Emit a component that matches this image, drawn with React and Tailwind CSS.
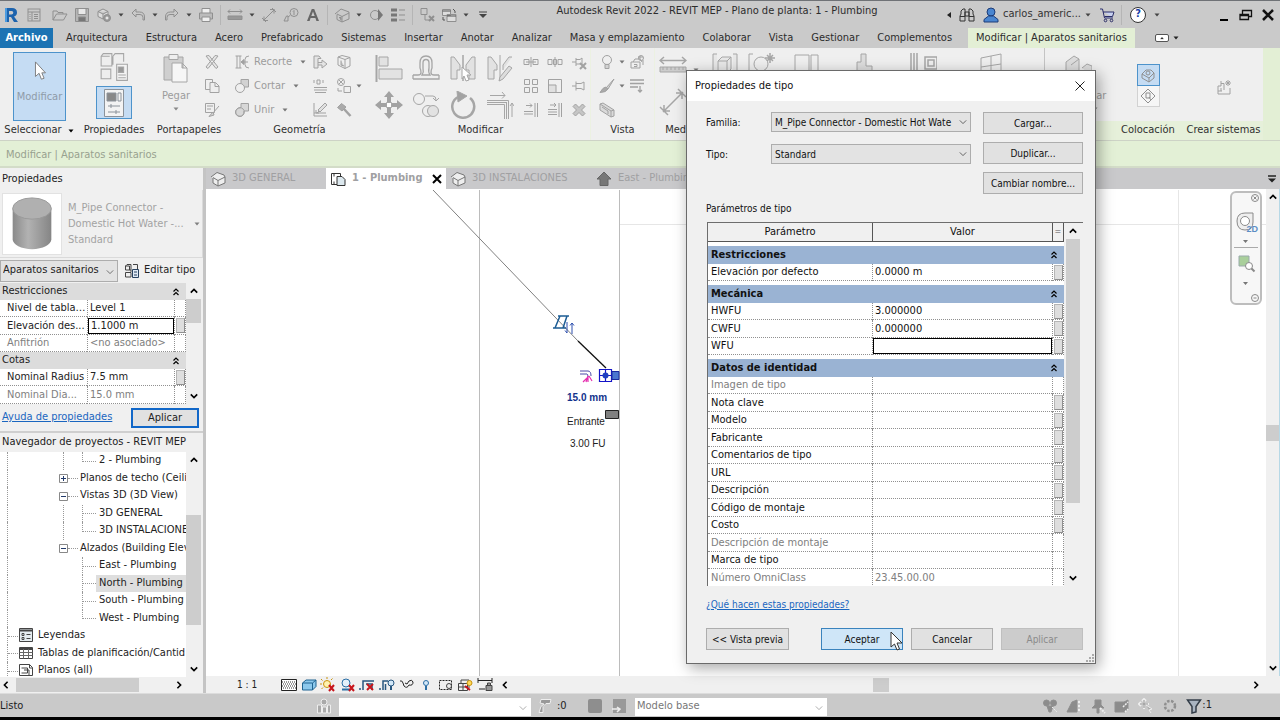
import clsx from "clsx";

const G = "#8f8f8f";

const TABS = [
  "Arquitectura", "Estructura", "Acero", "Prefabricado", "Sistemas", "Insertar", "Anotar", "Analizar",
  "Masa y emplazamiento", "Colaborar", "Vista", "Gestionar", "Complementos",
];

const TYPE_GROUPS = [
  { title: "Restricciones", rows: [{ name: "Elevación por defecto", value: "0.0000 m", button: true }] },
  {
    title: "Mecánica",
    rows: [
      { name: "HWFU", value: "3.000000", button: true },
      { name: "CWFU", value: "0.000000", button: true },
      { name: "WFU", value: "", button: true, active: true },
    ],
  },
  {
    title: "Datos de identidad",
    rows: [
      { name: "Imagen de tipo", value: "", muted: true },
      { name: "Nota clave", value: "", button: true },
      { name: "Modelo", value: "", button: true },
      { name: "Fabricante", value: "", button: true },
      { name: "Comentarios de tipo", value: "", button: true },
      { name: "URL", value: "", button: true },
      { name: "Descripción", value: "", button: true },
      { name: "Código de montaje", value: "", button: true },
      { name: "Costo", value: "", button: true },
      { name: "Descripción de montaje", value: "", muted: true },
      { name: "Marca de tipo", value: "" },
      { name: "Número OmniClass", value: "23.45.00.00", muted: true },
    ],
  },
];

const INSTANCE_GROUPS = [
  {
    title: "Restricciones",
    rows: [
      { name: "Nivel de tabla ...", value: "Level 1" },
      { name: "Elevación des...", value: "1.1000 m", button: true, active: true },
      { name: "Anfitrión", value: "<no asociado>", muted: true },
    ],
  },
  {
    title: "Cotas",
    rows: [
      { name: "Nominal Radius", value: "7.5 mm", button: true },
      { name: "Nominal Dia...", value: "15.0 mm", muted: true },
    ],
  },
];

// `rail` keeps the parent's dotted guide running past a nested item.
const TREE = [
  { level: 3, label: "2 - Plumbing", last: true, rail: true },
  { level: 2, label: "Planos de techo (Ceili", sign: "+" },
  { level: 2, label: "Vistas 3D (3D View)", sign: "-" },
  { level: 3, label: "3D GENERAL", rail: true },
  { level: 3, label: "3D INSTALACIONE", last: true, rail: true },
  { level: 2, label: "Alzados (Building Elev", sign: "-" },
  { level: 3, label: "East - Plumbing" },
  { level: 3, label: "North - Plumbing", selected: true },
  { level: 3, label: "South - Plumbing" },
  { level: 3, label: "West - Plumbing", last: true },
  { level: 1, label: "Leyendas", icon: "legend" },
  { level: 1, label: "Tablas de planificación/Cantid", icon: "table" },
  { level: 1, label: "Planos (all)", icon: "sheet" },
];

// Small drawings on a 16 x 16 grid.
const ICONS = {
  home: <><rect x="2" y="2" width="12" height="12" /><path d="M2 5h12M6 5v9M8 7.500h4M8 9.500h4M8 11.500h4M3.500 7.500h1M3.500 9.500h1M3.500 11.500h1" /></>,
  open: <path d="M1 13V4h4l1 1.500h5V7M1 13l3.500-6H15l-3.500 6z" />,
  save: <><path d="M1.500 1.500h13v13h-13z" fill="#b5b5b5" /><path d="M4 1.500h8v6H4z" fill="#e8e8e8" /><path d="M4.500 10h7v4.500h-7z" fill="#777" /></>,
  sync: <><path d="M2 4.500 7 2l5 2.500v5L7 12 2 9.500zM2 4.500 7 7l5-2.500M7 7v5" fill="#ddd" /><circle cx="11" cy="11" r="3.500" fill="#999" /><path d="M9.500 11h3M11 9.500v3" stroke="#fff" /></>,
  undo: <path d="M6 2 2 6l4 4V7.500h4q3 0 3 3V13h1.500v-3q0-5-5-5H6z" />,
  redo: <path d="m10 2 4 4-4 4V7.500H6q-3 0-3 3V13H1.500v-3q0-5 5-5H10z" />,
  print: <><path d="M4 6V1.500h8V6" fill="#eee" /><path d="M1.500 6h13v6h-13z" fill="#bbb" /><path d="M4 10h8v4.500H4z" fill="#eee" /></>,
  measure: <><path d="M1 4.500h14M3 2.500l-2 2 2 2M13 2.500l2 2-2 2" /><path d="M1 9h14v3.500H1z" fill="#999" /></>,
  dim: <path d="m2.500 13.500 11-11M1 11l4 4M11 1l4 4M3 9.500v4h4M13 6.500v-4H9" />,
  tag: <><circle cx="11" cy="5.500" r="4" /><path d="M10 4.500l1-1v4.500M5 9v5H1l2.500-5zM7 8.500 5 10" /></>,
  letter: <path d="m2 14 4.800-12h2.400L14 14h-2.600l-1-3H5.600l-1 3zm4.300-5h3.400L8 4.500z" fill="#666" stroke="none" />,
  house: <><path d="M1 7 7 2l8 3v7l-7 3-5-2.500V7.500" /><path d="m3 7 5 2.500V15M8 9.500 15 6" /><path d="M5 10.500h2v3" fill="#999" /></>,
  section: <><circle cx="7" cy="8" r="4.500" /><path d="m10 2 5 6-5 6z" fill="#777" stroke="none" /></>,
  thin: <><path d="M1 3h6M1 8h6M1 13h6" strokeWidth="3" stroke="#777" /><path d="M9 3h6M9 8h6M9 13h6" /></>,
  closewin: <><path d="M2 1.500h6v6H2zM6 7v6h4" /><path d="m10 9 5 5m0-5-5 5" strokeWidth="2" /></>,
  switchwin: <><path d="M1.500 2.500h8v6h-8zM6 7.500h9v7H6z" fill="#ddd" /><path d="M1.500 4h8M6 9h9M12 2l2 2v2M2 10v3h2" stroke="#555" /></>,
  binoculars: <><path d="M2 7V4l2-2h2v12H1V9zM14 7V4l-2-2h-2v12h5V9zM6 5h4v4H6z" stroke="#333" /><path d="M1 9.500h5M10 9.500h5" stroke="#333" /></>,
  user: <><circle cx="8" cy="5" r="4" fill="#4a86d0" stroke="#1d3c78" /><path d="M5.500 9 1 12.500V15h14v-2.500L10.500 9z" fill="#4a86d0" stroke="#1d3c78" /></>,
  cart: <><path d="M1 2h2.500l2 9H14M4 5h11l-1.500 4.500H5.500" fill="#c9d2f2" stroke="#2b2d66" /><circle cx="6.500" cy="13.500" r="1.300" stroke="#2b2d66" /><circle cx="12.500" cy="13.500" r="1.300" stroke="#2b2d66" /></>,
  cut: <path d="m2 2 3-.500L14 13l-2 1.500L2 2zM14 2l-3-.500L2 13l2 1.500z" fill="#e4e4e4" />,
  copy: <><path d="M1.500 1.500h7v10h-7z" /><path d="M6 4.500h5.500L15 8v6.500H6zM11 5v3.500h4" fill="#eee" /></>,
  match: <><path d="M1.500 1.500h9v9h-9zM3 4h6M3 7h4" /><path d="m15 4-6 7M9 10l-4 4.500 5-1.500z" fill="#ccc" /></>,
  cope: <><path d="M1.500 2h6M1.500 14h6M3 2v12M6 2v12M15 2q-4 0-4 3.500v5q0 3.500 4 3.500M14 8H7.500" /><path d="m10 5.500-3 2.500 3 2.500z" fill={G} /></>,
  cutgeo: <><path d="M7 1.500h7.500V9H7z" fill="#ccc" /><circle cx="6" cy="10" r="4.500" fill="#efefef" /></>,
  join: <><path d="M7 1.500h7.500V9H10q0 5-4 5.500Q1.500 14 1.500 10 2 6 7 5.500z" fill="#d2d2d2" /><circle cx="6" cy="10" r="4.300" /></>,
  wall: <><path d="M2 2h5l2 2.500H6V14H2zM6 8.500h4V6l5 4-5 4v-3H6" fill="#e2e2e2" /></>,
  cube: <><path d="m2 3 4-1.500 8 2V12l-5 2.500L2 11zM2 3l7 2.500 5-2M9 5.500v9" /><path d="M5 6.500v4.500l3 1" fill="#bbb" /></>,
  beam: <><path d="M2 2v3M5 2h3v4H5zM11 2v3M2 9.500h13M2 12h13M3 14.500h11" /></>,
  split: <><circle cx="5" cy="4" r="3.500" /><path d="m3 2 4 4m0-4L3 6M8 8.500h6.500v6H8zM2 10v3h4" /></>,
  demolish: <><path d="M2 1v13h13M5 11l8-8M4 8v3h3M2 11h12" /><path d="m13 1 2 2-7 7-2-2z" fill="#ddd" /></>,
  hammer: <><path d="m1.500 5.500 4-4 4.500 3.500-4 4z" fill="#999" /><path d="m8 7 6.500 7" strokeWidth="2.500" /></>,
  splitface: <path d="M1 5.500h5v5H1zM10 5.500h5v5h-5zM8 3v10M3 8h10" />,
  splitgap: <path d="M1 5.500h4v5H1zM11 5.500h4v5h-4zM6.500 5.500h3v5h-3zM8 3v10" />,
  unpin: <><path d="M1 8h4M5 4v8M5 5.500h4L11 4v7l-2-1H5" /><path d="m9 9 6 6m0-6-6 6" strokeWidth="2" /></>,
  pin: <path d="M1 8h4M5 3.500v9M5 5.500h5L13 4v8l-3-1.500H5" />,
  array: <path d="M1.500 1.500h5v5h-5zM9.500 1.500h5v5h-5zM1.500 9.500h5v5h-5zM9.500 9.500h5v5h-5z" />,
  scale: <><path d="M1.500 1.500h13v13h-13z" /><path d="M1.500 7h7.500v7.500H1.500z" fill="#ddd" /></>,
  trimone: <path d="M1 9.500h9M1 12h9M3 3.500h6M7 1.500l2 2-2 2M12 1v14M14.500 1v14" />,
  trimmany: <path d="M1 7.500h9M1 10h9M1 12.500h9M3 3h6M7 1l2 2-2 2M12 1v14M14.500 1v14" />,
  remove: <path d="M2 4.500 4.500 2 8 5.500 11.500 2 14 4.500 10.500 8l3.500 3.500-2.500 2.500L8 10.500 4.500 14 2 11.500 5.500 8z" fill="#bbb" />,
  bulb: <><circle cx="8" cy="6" r="4.500" /><path d="M6 10.500h4v4H6z" fill="#ccc" /></>,
  displace: <><path d="M2 8h9v6H2zM4 8l2-3h5l2 3M5 10.500h3v2H5M11 5V2M9 3h5M14 6v5" /><circle cx="12" cy="4" r="2.500" /></>,
  brush: <><path d="m15 1-8 9 2 1z" fill="#ccc" /><path d="M7 9q-3 0-6 5.500 6 0 8-3.500z" fill="#999" /></>,
  linework: <path d="M1 2h14M1 5.500h14M1 9h8M11 8v6M9 12l2 2 2-2" strokeWidth="1.300" />,
  box: <><path d="m1 2 3-1 11 7v6l-3 1L1 8zM1 2l11 7v6M12 9l3-1M3 5l6 4v3" fill="#d6d6d6" /></>,
  placeface: <><path d="m2 7 4-4h5l3 3v5l-5 4-7-4zM2 7l7 4 5-5M9 11v4" /><circle cx="8" cy="6" r="2" /></>,
  placeplane: <><path d="m8 1 7 7-7 7-7-7z" /><path d="M6 5h4v5H6zM9 9l2 3" /></>,
  system: <><path d="M5 2v5H2v8h12V9M5 4.500h3V11M5 12V9M2 12h4" /><path d="M12 1v6M9 4h6M10 2l4 4m0-4-4 4" /></>,
  view3d: <><path d="M1 6 7 1.500 14 4l1 2v6l-7 3-5-3V7" fill="#eee" stroke="#777" /><path d="m3 6.500 5 3V15M8 9.500 15 6" stroke="#777" /></>,
  plan: <><path d="M1.500 2.500h9v11h-9z" fill="#fff" stroke="#333" /><path d="M7 5.500h5l3 3v6H7z" fill="#dce8ee" stroke="#333" /><path d="M4 2.500v3M4 13.500v-3" stroke="#333" /></>,
  elevation: <path d="m8 1 7 7h-3v6.500H4V8H1z" fill="#777" stroke="#666" />,
  legend: <><path d="M1.500 1.500h13v13h-13z" fill="#e5ecef" stroke="#444" /><path d="M1.500 3.500h13" stroke="#444" strokeWidth="2" /><path d="M4 6.500h2v2H4zM4 10.500h2v2H4zM8.500 7.500h4M8.500 11.500h4" stroke="#444" /></>,
  table: <><path d="M1.500 2.500h13v11h-13z" fill="#fff" stroke="#444" /><path d="M1.500 4h13" stroke="#444" strokeWidth="2" /><path d="M1.500 7.500h13M1.500 10.500h13M5.500 4v9.500M10.500 4v9.500" stroke="#666" /></>,
  sheet: <><path d="M1.500 2.500h10l3 3v8h-13z" fill="#fff" stroke="#444" /><path d="M3.500 6h6v5h-6M6 8h5v5.500M11.500 2.500V6h3" stroke="#444" /></>,
  edittype: <><path d="M1.500 3 3 1.500h4V7H1.500zM1.500 9.500h5.500V14H1.500zM9 1.500h4.500V6M1.500 3h4V7M7 9V7" stroke="#444" /><path d="M8.500 6.500h6v8h-6z" fill="#dfe9f5" stroke="#27415f" /><path d="M10 9h3M10 12h3" stroke="#27415f" /></>,
  detail: <><path d="M.5 2.500h15v11H.500z" fill="#fff" stroke="#222" /><path d="M1 5h14M1 9h14" stroke="#333" strokeDasharray="1 1" /><path d="M2 7h13M2 11h13" stroke="#333" strokeDasharray="1 1" /></>,
  bluebox: <><path d="M1.500 6 5 3h10v6.500L11.500 13h-10z" fill="#8cc8ec" stroke="#1f6391" /><path d="M1.500 6h10v7M11.500 6 15 3" stroke="#1f6391" /></>,
  sun: <><circle cx="7" cy="7" r="3.500" fill="#fff3b0" stroke="#c99310" /><path d="M7 0v2M1 2l1.500 1.500M0 7h2M1.500 12 3 10.500M12.500 1.500 11 3" stroke="#c99310" /><path d="m9 8 5 6m0-6-5 6" stroke="#c8151b" strokeWidth="2" /></>,
  shadow: <><circle cx="6" cy="6" r="4" fill="#e4f0fa" stroke="#2b6ea5" /><path d="M2 12.500h8" stroke="#2b6ea5" strokeWidth="2" /><path d="m9 8 5 6m0-6-5 6" stroke="#c8151b" strokeWidth="2" /></>,
  crop: <><path d="M0 12h2M4 13V4h11M7 7h6v6" stroke="#27567f" strokeWidth="1.500" /><path d="m8 7 6 6m0-6-6 6" stroke="#c8151b" strokeWidth="2" /></>,
  cropshow: <><path d="M0 12h2M4 13V4h5M6.500 13V7" stroke="#27567f" strokeWidth="1.500" /><circle cx="12" cy="6" r="3" fill="#d3e8f8" stroke="#27567f" /><path d="M12 9v4" stroke="#27567f" strokeWidth="2" /></>,
  glasses: <><path d="M1 4q2-1 3 2l1 3q3 3 5-1 4 1 4-3-1-3-4-1L8 7 6 6" stroke="#222" /></>,
  bluebulb: <><circle cx="8" cy="6" r="2.500" fill="#d3e8f8" stroke="#2b6ea5" /><path d="M8 9v4" stroke="#2b6ea5" strokeWidth="2" /></>,
  tempview: <><path d="M1.500 3.500h12v9h-12z" stroke="#222" strokeDasharray="2 1" /><circle cx="11" cy="9" r="2.500" fill="#eee" stroke="#444" /></>,
  analytic: <><path d="M1.500 6.500h9v7h-9zM4 6V3h8v8M1.500 10h9M6 6.500v7" stroke="#444" /><path d="m8 9 5 4" stroke="#c8151b" strokeWidth="2" /><circle cx="12.500" cy="6" r="2.500" fill="#ffd957" stroke="#c99310" /></>,
  constraints: <><path d="M1 3.500h14M1 1v5M15 1v5M2 12h6" stroke="#222" /><path d="M9 8.500h6v5H9zM10.500 8V6h3v2" fill="#999" stroke="#444" /></>,
  workset: <><path d="M1.500 7h4v8h-4zM6.500 9h4v6h-4zM11.500 7h3v8h-3z" fill="#a9a9a9" stroke="#eee" /><circle cx="8" cy="4" r="3" fill="#a9a9a9" stroke="#eee" /></>,
  request: <><path d="M4 1.500h10l-1 4H9l-3 3v6H2l2-6 3-2.500-4-1z" fill="#999" stroke="#eee" /></>,
  square: <rect x="1" y="1" width="14" height="14" rx="2" fill="#8e8e8e" stroke="none" />,
  squareadd: <><rect x="2" y="1" width="13" height="14" fill="#999" stroke="none" /><path d="M1 11h7M6 9l3 2-3 3" stroke="#eee" strokeWidth="1.500" /></>,
  selflink: <><circle cx="4.500" cy="5" r="3" fill="#8c8c8c" /><circle cx="11.500" cy="5" r="3" fill="#8c8c8c" /><path d="M5 8h6l-2 6H7z" fill="#8c8c8c" /><path d="m10 9 5 5" stroke="#eee" strokeDasharray="2 1" /></>,
  selunder: <><path d="M1 14 6 4l5-2v12z" fill="#8c8c8c" /><path d="M13 3v11" stroke="#eee" strokeWidth="2" strokeDasharray="2 2" /></>,
  selpin: <><path d="M5 2h6v5l3 3H2l3-3zM7 10h2v5H7z" fill="#8c8c8c" /><path d="m10 10 5 5" stroke="#eee" strokeDasharray="2 1" strokeWidth="2" /></>,
  selface: <><path d="M1 4h9l4-2v9l-3 3H1z" fill="#8c8c8c" /><path d="m9 9 5-5M11 14l3-3" stroke="#eee" strokeWidth="1.500" strokeDasharray="2 1" /></>,
  drag: <><path d="M6 1v10M1 6h10M4 3l2-2 2 2M3 4 1 6l2 2" stroke="#eee" strokeWidth="2" /><path d="M6 2v8M2 6h8" /><path d="m8 7 6 4-3 1 2 3" fill="#aaa" stroke="#eee" /></>,
  ring: <circle cx="8" cy="8" r="5" strokeWidth="2.500" strokeDasharray="2.500 1.500" />,
  filter: <path d="M1.500 2h13L10 8.500V14l-4 1V8.500z" fill="#a9b4c1" stroke="#333d48" strokeWidth="1.500" />,
};

function Icon({ name, className = "size-4" }) {
  return (
    <svg viewBox="0 0 16 16" className={clsx("shrink-0", className)} fill="none" stroke={G} aria-hidden="true">
      {ICONS[name]}
    </svg>
  );
}

function Caret({ className = "text-[#444]" }) {
  return (
    <svg viewBox="0 0 6 4" className={clsx("h-1 w-1.5 shrink-0", className)} aria-hidden="true">
      <path d="M.5.500h5L3 3.500z" fill="currentColor" />
    </svg>
  );
}

const CHEVRONS = { up: "M1 7l4-4 4 4", down: "M1 3l4 4 4-4", left: "M7 1 3 5l4 4", right: "M3 1l4 4-4 4" };

function Chevron({ dir = "down", className = "text-black", stroke = 2 }) {
  return (
    <svg viewBox="0 0 10 10" className={clsx("size-2 shrink-0", className)} aria-hidden="true">
      <path d={CHEVRONS[dir]} fill="none" stroke="currentColor" strokeWidth={stroke} />
    </svg>
  );
}

function DoubleChevron() {
  return (
    <svg viewBox="0 0 8 8" className="size-2 shrink-0" aria-hidden="true">
      <path d="M1.500 3.500 4 1l2.500 2.500M1.500 7 4 4.500 6.500 7" fill="none" stroke="#000" strokeWidth="1.200" />
    </svg>
  );
}

function IconButton({ name, label, className }) {
  return (
    <button type="button" aria-label={label || name} className={clsx("flex items-center justify-center", className)}>
      <Icon name={name} />
    </button>
  );
}

const Divider = () => <span className="h-5 w-px bg-[#b5b5b5]" />;

function TitleBar() {
  return (
    <header className="flex h-7 items-center border-t border-[#6f7276] bg-[#cacaca] pr-1">
      <div className="flex items-center gap-1.5 pl-1 text-[#444]">
        <svg viewBox="0 0 14 16" className="mr-0.5 h-4 w-3.5" aria-label="Revit">
          <path d="M1 1h7q5 0 5 4.500 0 3-3 4L14 15h-4L7 10H5v5H1zm4 3v3.500h2.500q1.800 0 1.800-1.800T7.500 4z" fill="#1d63ad" />
          <path d="M1 1h2v14H1z" fill="#4b9be0" />
        </svg>
        <IconButton name="home" />
        <IconButton name="open" className="ml-1" />
        <IconButton name="save" />
        <IconButton name="sync" />
        <Caret />
        <IconButton name="undo" />
        <Caret />
        <IconButton name="redo" />
        <Caret />
        <IconButton name="print" />
        <Divider />
        <IconButton name="measure" />
        <Caret />
        <IconButton name="dim" />
        <IconButton name="tag" />
        <IconButton name="letter" />
        <Divider />
        <IconButton name="house" />
        <Caret />
        <IconButton name="section" />
        <IconButton name="thin" />
        <Divider />
        <IconButton name="closewin" />
        <IconButton name="switchwin" />
        <Caret />
        <svg viewBox="0 0 8 8" className="ml-1 size-2" aria-hidden="true">
          <path d="M0 1h8" stroke="#444" />
          <path d="M0 3h8L4 7z" fill="#444" />
        </svg>
      </div>
      <h1 className="flex-1 pb-1.5 text-center text-[#2c2c2c]">
        Autodesk Revit 2022 - REVIT MEP - Plano de planta: 1 - Plumbing
      </h1>
      <div className="flex items-center text-[#333]">
        <svg viewBox="0 0 4 6" className="mr-2 h-1.5 w-1" aria-hidden="true"><path d="M4 0v6L0 3z" fill="#222" /></svg>
        <IconButton name="binoculars" label="Buscar" className="mr-2" />
        <button type="button" className="mr-2 flex items-center gap-1">
          <Icon name="user" />
          <span>carlos_americ...</span>
          <Caret />
        </button>
        <IconButton name="cart" label="Tienda" className="mr-1.5" />
        <Divider />
        <button type="button" aria-label="Ayuda" className="ml-2 mr-2 flex size-4 items-center justify-center rounded-full border border-[#333] bg-white text-[11px] font-bold text-[#1a3fa8]">
          ?
        </button>
        <Caret />
        <div className="ml-14 flex items-center gap-1.5 text-black">
          <button type="button" aria-label="Minimizar" className="flex size-4 items-end justify-center pb-0.5">
            <span className="h-0.5 w-2 bg-black" />
          </button>
          <button type="button" aria-label="Restaurar">
            <svg viewBox="0 0 16 16" className="size-4" fill="none" stroke="#111" strokeWidth="1.300">
              <path d="M4.500 7V3.500h9v6H11M2 7.500h8.500v5H2zM2 8.500h8.500" />
            </svg>
          </button>
          <button type="button" aria-label="Cerrar">
            <svg viewBox="0 0 16 16" className="size-4" stroke="#111" strokeWidth="2.500"><path d="m3 3 10 10M13 3 3 13" /></svg>
          </button>
        </div>
      </div>
    </header>
  );
}

function RibbonTabs() {
  return (
    <nav className="flex h-5 items-center bg-[#cacaca] text-[#2c2c2c]">
      <a href="#archivo" className="mr-3 flex h-full w-[53px] items-center justify-center bg-[#1c73b3] font-bold text-white">
        Archivo
      </a>
      <div className="flex items-center gap-[18px] pl-px">
        {TABS.map((tab) => (
          <a key={tab} href="#ribbon" className="whitespace-nowrap">{tab}</a>
        ))}
      </div>
      <a href="#ribbon" className="ml-4 flex h-full items-center whitespace-nowrap bg-[#e3efd5] px-2">
        Modificar | Aparatos sanitarios
      </a>
      <button type="button" aria-label="Minimizar cinta" className="ml-5 flex items-center gap-1">
        <span className="flex h-2 w-3.5 items-center justify-center rounded-xs border border-[#555] bg-white">
          <Caret className="rotate-180 scale-75" />
        </span>
        <Caret className="text-[#222]" />
      </button>
    </nav>
  );
}

function Panel({ title, className, titleClass, children }) {
  return (
    <section className={clsx("flex shrink-0 flex-col", className)}>
      <div className="flex h-[73px] pt-1">{children}</div>
      <h2 className={clsx("flex flex-1 items-center justify-center gap-1.5 whitespace-nowrap text-[#2f2f2f]", titleClass)}>{title}</h2>
    </section>
  );
}

function SmallColumn({ names }) {
  return (
    <div className="flex flex-col gap-2 pt-0.5 opacity-80">
      {names.map((n) => <IconButton key={n} name={n} />)}
    </div>
  );
}

// Larger ribbon drawings on a 28 x 28 grid.
function Big({ children, label, className = "size-7" }) {
  return (
    <button type="button" aria-label={label} className={clsx("shrink-0", className)}>
      <svg viewBox="0 0 28 28" className="size-full" fill="none" stroke="#a6a6a6">{children}</svg>
    </button>
  );
}

function ModifyPanel() {
  return (
    <Panel title="Modificar" className="w-[219px]">
      <div className="flex gap-[9px] pl-1">
        <div className="grid grid-cols-4 gap-x-[9px] gap-y-1.5 pt-0.5">
          <Big label="Alinear"><path d="M1.500 1v27" strokeWidth="2" /><path d="M4 3h9v9H4zM4 15h23v10H4z" fill="#e2e2e2" /></Big>
          <Big label="Desfase"><path d="M1 21h5q3 0 3-2.500t-1-4.500V9q0-7 6-7t6 7v5q-1 2-1 4.500t3 2.500h5M1 25h26v-4M1 21v4M10 21h8q-2-3-1-7V9q0-3.500-3-3.500T11 9v5q1 4-1 7z" strokeWidth="1.300" /></Big>
          <Big label="Reflejar eje"><path d="M14 1v26" strokeWidth="1.500" /><path d="M2 3h3l6 8v5H8v9H2zM26 3h-3l-6 8v5h3v9h6z" fill="#e2e2e2" /><path d="m13 13 9 8h-4l2 5-3 1-2-5-2 3z" fill="#fff" /></Big>
          <Big label="Reflejar dibujar"><path d="M14 1v26" /><path d="M2 3h3l6 8v5H8v9H2zM26 3h-3l-6 8v5" fill="#e2e2e2" /><path d="m26 14-9 11-4 2 1-4 9-11z" fill="#ddd" /></Big>
          <Big label="Mover"><path d="m14 0 5 6h-3v5h-4V6H9zM14 28l5-6h-3v-5h-4v5H9zM0 14l6-5v3h5v4H6v3zM28 14l-6-5v3h-5v4h5v3z" fill="#a2a2a2" stroke="none" /><path d="M11.500 11.500h5v5h-5z" fill="#fff" /></Big>
          <Big label="Copiar"><circle cx="7" cy="8" r="5.500" /><path d="M13 5h8q3 0 3 4M21 7l3 3 3-3" /><circle cx="16" cy="20" r="5.500" fill="#eee" /><circle cx="21" cy="20" r="5.500" fill="#e2e2e2" /></Big>
          <Big label="Rotar"><path d="M9 6a11 11 0 1 0 12 1" strokeWidth="2.500" /><path d="m8 0 10 5-9 6z" fill="#a2a2a2" /></Big>
          <Big label="Recortar"><path d="M1 9.500h21.500V28M1 13.500h17.500V28M1 11.500h19M20.500 28V11M4 4.500h15M16 1l3 3.500-3 3M26 26V12M24 15l2-3 2 3" /></Big>
        </div>
        <div className="flex gap-2">
          <SmallColumn names={["splitface", "array", "trimone"]} />
          <SmallColumn names={["splitgap", "scale", "trimmany"]} />
          <SmallColumn names={["unpin", "pin", "remove"]} />
        </div>
      </div>
    </Panel>
  );
}

function Ribbon() {
  return (
    <div className="flex h-[93px] shrink-0 overflow-hidden border-b border-[#cdd3c6] bg-[#efefef]">
      <Panel title={<>Seleccionar <Caret className="text-black" /></>} className="w-[78px]">
        <button type="button" className="ml-[13px] flex h-[69px] w-[53px] flex-col items-center border border-[#4d93cb] bg-[#c5dcf3] pt-2 text-[#8f9ba8]">
          <svg viewBox="0 0 14 22" className="mb-2 h-5 w-3.5" aria-hidden="true">
            <path d="M2 1v16l4-3.500L8.500 20l3-1L9 13h4z" fill="#fff" stroke="#777" />
          </svg>
          Modificar
        </button>
      </Panel>
      <Panel title="Propiedades" className="w-[72px]">
        <div className="flex flex-1 flex-col items-center gap-1">
          <Big label="Propiedades de tipo" className="h-[30px] w-[30px]">
            <path d="M2 4 4 1.500h8V13H2zM2 4h8M13 4l2-2.500h8V9M2 16h9v9H2zM13 4v8M2 4v9" fill="#eee" />
            <path d="M16.500 11.500h10v15h-10z" fill="#f4f4f4" /><path d="M18 14h5v5h-5z" fill="#999" /><path d="M18 21.500h7M18 24h7" />
          </Big>
          <button type="button" aria-label="Propiedades" className="flex h-[33px] w-9 items-center justify-center border border-[#4d93cb] bg-[#c5dcf3]">
            <svg viewBox="0 0 20 28" className="h-7 w-5" fill="none" stroke="#8b929a">
              <path d="M.5.500h19v27H.500z" fill="#f3f3f3" /><path d="M3 4h9v8H3z" fill="#888" /><path d="M14 4h3v8h-3zM4 17h12M7 15v4M4 23h12M12 21v4" />
            </svg>
          </button>
        </div>
      </Panel>
      <Panel title="Portapapeles" className="w-[78px]">
        <div className="flex gap-3 pl-2.5">
          <button type="button" className="flex w-8 flex-col items-center text-[#9c9c9c]">
            <svg viewBox="0 0 28 30" className="mb-1 h-[32px] w-7" fill="none" stroke="#a6a6a6" aria-hidden="true">
              <path d="M2 4h19v23H2z" fill="#cfcfcf" /><path d="M7 1.500h9v5H7z" fill="#eee" /><path d="M10 10h10l5 5v14H10zM20 10v5h5" fill="#f6f6f6" />
            </svg>
            Pegar
            <Caret className="mt-0.5 text-[#888]" />
          </button>
          <SmallColumn names={["cut", "copy", "match"]} />
        </div>
      </Panel>
      <Panel title="Geometría" className="w-[143px]">
        <div className="flex gap-2 pl-1.5 text-[#9c9c9c]">
          <div className="flex w-[70px] flex-col gap-2 pt-0.5">
            {[["cope", "Recorte"], ["cutgeo", "Cortar"], ["join", "Unir"]].map(([icon, label]) => (
              <button key={label} type="button" className="flex h-4 items-center gap-1">
                <Icon name={icon} className="size-4 opacity-80" />
                <span>{label}</span>
                <Caret className="ml-1 text-[#777]" />
              </button>
            ))}
          </div>
          <SmallColumn names={["wall", "beam", "demolish"]} />
          <SmallColumn names={["cube", "split", "hammer"]} />
          <Caret className="-ml-1 mt-8 text-[#777]" />
        </div>
      </Panel>
      <ModifyPanel />
      <Panel title="Vista" className="w-[65px] border-x border-[#ecf1e2]">
        <div className="flex gap-1 pl-2">
          <SmallColumn names={["bulb", "brush", "box"]} />
          <div className="flex flex-col gap-5 pt-2"><Caret className="text-[#777]" /><Caret className="text-[#777]" /></div>
          <SmallColumn names={["displace", "linework"]} />
        </div>
      </Panel>
      <Panel title="Medir" className="w-12">
        <div className="flex gap-1.5 pl-1 pt-0.5">
          <div className="flex flex-col gap-1.5">
            <Big label="Medir distancia"><path d="M1 6.500h26M5 3 1 6.500 5 10M23 3l4 3.500-4 3.500" strokeWidth="1.500" /><path d="M1 13h26v5H1z" fill="#ccc" /><path d="M4 13v3M8 13v3M12 13v3M16 13v3M20 13v3M24 13v3" /></Big>
            <Big label="Cota alineada"><path d="m4 24 20-20M1 19l8 8M19 1l8 8M5 17v6h6M23 11V5h-6" strokeWidth="1.500" /></Big>
          </div>
          <Caret className="mt-3.5 text-[#777]" />
        </div>
      </Panel>
      <Panel title="" className="w-[82px]">
        <div className="flex gap-2 pl-2">
          <Big label="Crear grupo"><path d="M6 2H2v24h4M22 2h4v24h-4M7 9l4-4h9v12l-4 4H7zM7 9h9v12M16 9l4-4" fill="#e8e8e8" /></Big>
          <Big label="Crear similar"><path d="M6 2H2v24h4" /><circle cx="14" cy="12" r="7" /><path d="M23 1v10M18 6h10M20 3l6 6m0-6-6 6" strokeWidth="1.500" /></Big>
        </div>
      </Panel>
      <Panel title="" className="w-[260px] border-r border-[#c4c4c4]">
        <div className="flex gap-[30px] pl-2">
          <Big label="Modo"><path d="M2 3h14v18H2zM18 3h7v18h-7z" /></Big>
          <Big label="Host"><path d="M10 2h5v12h6v8H6V10h4z" fill="#ddd" /></Big>
          <Big label="Conectar"><path d="M2 1v26M5 1v26M8 1v26M16 5h12v12H16zM19 8h6v6h-6z" strokeWidth="1.500" /></Big>
          <Big label="Editar" className="ml-3 size-7"><path d="M2 6 22 2v20L2 25zM12 4v20M2 15l20-3" /></Big>
        </div>
      </Panel>
      <Panel title="" className="w-[67px]" titleClass="bg-[#e6f0da]">
        <button type="button" className="flex flex-col items-end text-[#9c9c9c]">
          <svg viewBox="0 0 28 28" className="mb-1 mr-3.5 h-8 w-7" fill="none" stroke="#a6a6a6" aria-hidden="true">
            <path d="M2 8 10 2l5 3v12l-8 6-5-3zM7 11l8-6M18 14l5-4 5 2v10" fill="#ddd" />
          </svg>
          <span className="pl-1">Seleccionar</span>
          <Caret className="mr-2 mt-0.5 text-[#888]" />
        </button>
      </Panel>
      <Panel title="Colocación" className="w-[72px]" titleClass="bg-[#e6f0da]">
        <div className="flex flex-1 flex-col items-center pt-3">
          <IconButton name="placeface" className="h-[22px] w-[23px] border border-[#4d93cb] bg-[#c5dcf3]" />
          <IconButton name="placeplane" className="h-[21px] w-[23px] border border-t-0 border-[#d2d2d2] bg-[#f6f6f6]" />
        </div>
      </Panel>
      <Panel title="Crear sistemas" className="w-[79px]" titleClass="bg-[#e6f0da]">
        <div className="flex flex-1 justify-center opacity-80"><IconButton name="system" label="Crear sistemas" /></div>
      </Panel>
      <div className="flex-1 bg-[#e3efd5]" />
    </div>
  );
}

function CellButton() {
  return <button type="button" aria-label="Asociar parámetro" className="block h-[15px] w-full border border-[#b5b5b5] border-r-[#8f8f8f] border-b-[#8f8f8f] bg-[#dedede]" />;
}

// Property grid shared by the palette and the type dialog.
function GroupRows({ group, strong }) {
  return (
    <tbody>
      <tr>
        <th colSpan="3" scope="colgroup" className={clsx("p-0 text-left", strong ? "border-t-4 border-white font-bold" : "font-normal")}>
          <span className={clsx("flex items-center justify-between", strong ? "h-[18px] bg-[#9ab3d3] pl-[3px] pr-1.5" : "h-[17px] bg-[#dcdcdc] pl-0.5 pr-1.5")}>
            {group.title}
            <DoubleChevron />
          </span>
        </th>
      </tr>
      {group.rows.map((row) => (
        <tr key={row.name} className={clsx("leading-[16px] odd:h-[18px] even:h-[17px]", row.muted && "text-[#808080]")}>
          <td className={clsx("truncate border-b border-dotted border-[#909090] p-0", strong ? "pl-[3px]" : "pl-[7px]")}>{row.name}</td>
          <td className="border-b border-l border-dotted border-[#909090] p-0">
            {row.active ? (
              <input aria-label={row.name} defaultValue={row.value} className="block h-4 w-full border border-black bg-white pl-0.5 outline-none" />
            ) : (
              <span className="block truncate pl-0.5">{row.value}</span>
            )}
          </td>
          <td className="border-x border-b border-dotted border-[#909090] p-0 pl-px">{row.button && <CellButton />}</td>
        </tr>
      ))}
    </tbody>
  );
}

function VScroll({ thumb, className }) {
  return (
    <div className={clsx("flex flex-col items-center justify-between bg-[#f0f0f0]", className)}>
      <span className="flex h-4 items-center"><Chevron dir="up" /></span>
      <div className="flex w-full flex-1 flex-col"><div className={clsx("w-full bg-[#cdcdcd]", thumb)} /></div>
      <span className="flex h-4 items-center"><Chevron /></span>
    </div>
  );
}

function PropertiesPalette() {
  return (
    <section className="flex flex-col border-b-2 border-[#cfcfcf] bg-[#f0f0f0]">
      <h2 className="flex h-[22px] items-center pl-0.5">Propiedades</h2>
      <div className="flex h-[68px] items-center border-b border-r border-[#dadada] pl-0.5 text-[#a3a3a3]">
        <svg viewBox="0 0 60 62" className="h-[62px] w-[60px] border border-[#e2e2e2] bg-white" aria-hidden="true">
          <defs>
            <linearGradient id="side" x1="0" x2="1"><stop offset="0" stopColor="#8a8a8a" /><stop offset=".4" stopColor="#b2b2b2" /><stop offset="1" stopColor="#858585" /></linearGradient>
          </defs>
          <path d="M10 15v32c0 5 9 10 20 10s20-5 20-10V15z" fill="url(#side)" />
          <ellipse cx="30" cy="15" rx="20" ry="11" fill="#b0b0b0" stroke="#999" />
        </svg>
        <p className="flex-1 pl-1.5 leading-4">M_Pipe Connector -<br />Domestic Hot Water -...<br />Standard</p>
        <Caret className="mr-0.5 text-[#808080]" />
      </div>
      <div className="flex h-[25px] items-center gap-1.5">
        <div className="relative w-[118px]">
          <select aria-label="Categoría" className="block h-[22px] w-full appearance-none border border-[#adadad] bg-[#e3e3e3] pl-0.5 outline-none">
            <option>Aparatos sanitarios</option>
          </select>
          <Chevron className="pointer-events-none absolute right-1 top-2 text-[#555]" stroke={1} />
        </div>
        <button type="button" className="flex items-center gap-1 whitespace-nowrap">
          <Icon name="edittype" />
          Editar tipo
        </button>
      </div>
      <div className="flex h-[121px] overflow-hidden">
        <div className="flex-1 overflow-hidden bg-white">
          <table className="w-full table-fixed border-separate border-spacing-0">
            <colgroup><col /><col className="w-[87px]" /><col className="w-3" /></colgroup>
            {INSTANCE_GROUPS.map((g) => <GroupRows key={g.title} group={g} />)}
          </table>
        </div>
        <VScroll className="mr-0.5 w-[15px]" thumb="h-6" />
      </div>
      <div className="flex h-[27px] items-center justify-between pl-0.5 pr-1">
        <a href="#ayuda" className="text-[#1a66c0] underline">Ayuda de propiedades</a>
        <button type="button" className="h-5 w-[68px] border-2 border-[#1167c8] bg-[#e1e1e1]">Aplicar</button>
      </div>
    </section>
  );
}

function TreeItem({ item }) {
  const { level, label, sign, icon, last, rail, selected } = item;
  return (
    <li className="flex items-stretch whitespace-nowrap odd:h-[18px] even:h-[17px]">
      <span className="ml-[7px] w-px shrink-0 border-l border-dotted border-[#999]" />
      {level === 1 && (
        <>
          <span className="mb-2 w-2.5 shrink-0 border-b border-dotted border-[#999]" />
          <Icon name={icon} />
          <span className="pl-1">{label}</span>
        </>
      )}
      {level === 2 && (
        <>
          <span className="flex w-[60px] shrink-0 items-center justify-end">
            <svg viewBox="0 0 9 9" className="size-[9px]" fill="#fff" stroke="#888">
              <path d="M.5.500h8v8h-8z" />
              <path d={sign === "+" ? "M2 4.500h5M4.500 2v5" : "M2 4.500h5"} stroke="#223a6b" />
            </svg>
          </span>
          <span className="mb-2 w-2.5 shrink-0 border-b border-dotted border-[#999]" />
          <span className="pl-0.5">{label}</span>
        </>
      )}
      {level === 3 && (
        <>
          <span className={clsx("ml-[55px] w-[19px] shrink-0", rail && "border-l border-dotted border-[#999]")} />
          <span className={clsx("w-px shrink-0 border-l border-dotted border-[#999]", last && "mb-2")} />
          <span className="mb-2 w-[13px] shrink-0 border-b border-dotted border-[#999]" />
          <span className={clsx("flex-1 pl-[3px]", selected && "bg-[#dedede]")}>{label}</span>
        </>
      )}
    </li>
  );
}

function ProjectBrowser() {
  return (
    <section className="flex min-h-0 flex-1 flex-col bg-[#f0f0f0]">
      <h2 className="flex h-[19px] shrink-0 items-center pl-0.5">Navegador de proyectos - REVIT MEP</h2>
      <div className="flex min-h-0 flex-1">
        <ul className="flex-1 overflow-hidden bg-white leading-[16px] text-[#222]">
          {TREE.map((item) => <TreeItem key={item.label} item={item} />)}
        </ul>
        <VScroll className="mr-0.5 w-[15px]" thumb="mt-[47px] h-[110px]" />
      </div>
      <div className="flex h-4 shrink-0 items-center pl-0.5 pr-5">
        <Chevron dir="left" />
        <div className="ml-1.5 flex h-3.5 flex-1"><div className="w-[123px] bg-[#cdcdcd]" /></div>
        <Chevron dir="right" />
      </div>
    </section>
  );
}

function ViewTabs() {
  return (
    <nav className="flex h-[21px] shrink-0 items-center bg-[#c9c9cb] text-[#a0a0a2]">
      <a href="#general" className="flex h-full w-[120px] items-center gap-1.5 pl-1"><Icon name="view3d" />3D GENERAL</a>
      <div className="flex h-full w-[120px] items-center bg-white pl-1">
        <a href="#plumbing" className="flex flex-1 items-center gap-1.5 whitespace-nowrap font-bold"><Icon name="plan" />1 - Plumbing</a>
        <button type="button" aria-label="Cerrar vista" className="pr-1">
          <svg viewBox="0 0 10 10" className="size-2.5" stroke="#000" strokeWidth="2"><path d="m1 1 8 8M9 1 1 9" /></svg>
        </button>
      </div>
      <a href="#instalaciones" className="flex h-full w-[146px] items-center gap-1.5 whitespace-nowrap pl-1"><Icon name="view3d" />3D INSTALACIONES</a>
      <a href="#east" className="flex h-full flex-1 items-center gap-1.5 whitespace-nowrap pl-1"><Icon name="elevation" />East - Plumbing</a>
      <svg viewBox="0 0 8 8" className="mr-1 size-2" aria-hidden="true">
        <path d="M0 1h8" stroke="#222" strokeWidth="1.500" />
        <path d="M0 3.500h8l-4 4z" fill="#222" />
      </svg>
    </nav>
  );
}

function NavigationBar() {
  return (
    <div className="absolute right-1 top-0.5 flex h-[114px] w-8 flex-col items-center rounded-md border-2 border-[#bdbdbd] bg-[#f7f7f7]">
      <svg viewBox="0 0 28 110" className="h-[110px] w-7" fill="none" stroke="#8a8a8a" aria-hidden="true">
        <circle cx="23" cy="5" r="3.500" /><path d="m21.500 3.500 3 3m0-3-3 3" />
        <path d="M5 28q0-8 8-8h8v9q0 8-8 8t-8-9z" fill="#eee" /><circle cx="13" cy="28" r="4.500" fill="#fff" />
        <path d="M11 47h5l-2.500 3zM11 89h5l-2.500 3z" fill="#777" stroke="none" /><path d="M2 54.500h24" stroke="#aaa" />
        <path d="M7 63h10v10H7z" fill="#a9cf9b" stroke="#9aa" /><circle cx="17" cy="73" r="3.500" fill="#fff" /><path d="m19.500 75.500 3 3" strokeWidth="2" />
        <circle cx="23" cy="105" r="3.500" /><path d="M21.500 105h3" />
      </svg>
      <span className="absolute right-0.5 top-8 text-[9px] font-bold leading-none text-[#5d8dc4]">2D</span>
    </div>
  );
}

function Canvas() {
  return (
    <div className="flex min-h-0 flex-1 bg-white">
      <div className="relative flex-1 overflow-hidden font-['Liberation_Sans',sans-serif] text-[10px] leading-3">
        <svg className="absolute inset-0 size-full" fill="none" aria-hidden="true">
          <path d="M273.500 1v600M413.500 1v600" stroke="#bcbcbc" strokeWidth="1" />
          <path d="M972.500 1v600M414 35.500h700" stroke="#e6e6e6" />
          <path d="M227 1 372 152" stroke="#808080" />
          <path d="m372 152 28 27" stroke="#111" strokeWidth="1.300" />
          <path d="m349 139 5-12h7l-4 12zM347 139h13M352 127h11" stroke="#1c5c94" strokeWidth="1.500" />
          <path d="M361 133v11l-2-2.500M366 145v-11l-2 2.500M366 134l2 2.500" stroke="#2c4fae" />
          <path d="M374 182h8q3 0 3 5M374 185h7q1 0 1 3" stroke="#4a4aa8" />
          <path d="m382 188-5 5M382 187v6M383 187l3 5M382 187l-2 6" stroke="#e62fb0" strokeWidth="1.200" />
          <path d="M393.500 180.500h12v12h-12zM399.500 180v13M393 186.500h13" stroke="#1414c8" strokeWidth="1.200" />
          <circle cx="399.500" cy="186.500" r="3" fill="#1e3fc0" />
          <path d="M406 182.500h7v8h-7z" fill="#4a76cf" stroke="#1a2a9e" />
          <path d="M399.500 221.500h13v8h-13z" fill="#808080" stroke="#222" />
        </svg>
        <span className="absolute left-[361px] top-[203px] font-bold text-[#12328c]">15.0 mm</span>
        <span className="absolute left-[361px] top-[227px] text-[#222]">Entrante</span>
        <span className="absolute left-[364px] top-[249px] text-[#222]">3.00 FU</span>
        <NavigationBar />
      </div>
      <VScroll className="w-[14px] border-r border-[#b6d8e6]" thumb="mt-[220px] h-4" />
    </div>
  );
}

function ViewControlBar() {
  return (
    <div className="flex h-[17px] shrink-0 items-center bg-[#f0f0f0] pr-5">
      <span className="w-[75px] pl-[31px] text-[10px]">1 : 1</span>
      <div className="flex w-[212px] items-center justify-between">
        {["detail", "bluebox", "sun", "shadow", "crop", "cropshow", "glasses", "bluebulb", "tempview", "analytic", "constraints"].map((n) => (
          <IconButton key={n} name={n} />
        ))}
      </div>
      <Chevron dir="left" className="ml-2 text-black" />
      <div className="flex h-3.5 flex-1 justify-center"><div className="w-4 bg-[#cdcdcd]" /></div>
      <Chevron dir="right" />
    </div>
  );
}

function StatusCombo({ label, value }) {
  return (
    <div className="relative w-48">
      <select aria-label={label} className="block h-[18px] w-full appearance-none bg-white pl-0.5 text-[#777] outline-none">
        <option>{value}</option>
      </select>
      <Chevron className="pointer-events-none absolute right-1 top-1.5 text-[#999]" stroke={1} />
    </div>
  );
}

function StatusBar() {
  return (
    <footer className="flex h-[27px] shrink-0 items-center border-b-[3px] border-t border-b-black border-t-[#dcdcdc] bg-[#c9c9c9] pr-[68px] text-[#222]">
      <span className="w-[316px] pt-0.5">Listo</span>
      <Icon name="workset" />
      <div className="ml-[7px] pt-0.5"><StatusCombo label="Subproyecto activo" value="" /></div>
      <Icon name="request" className="ml-1.5 size-4" />
      <span className="ml-1 w-[30px] pt-0.5">:0</span>
      <Icon name="square" />
      <Icon name="squareadd" className="ml-2 mr-2 size-4" />
      <div className="pt-0.5"><StatusCombo label="Opción de diseño" value="Modelo base" /></div>
      <div className="ml-auto flex items-center gap-2">
        {["selflink", "selunder", "selpin", "selface", "drag", "ring"].map((n) => <IconButton key={n} name={n} />)}
        <button type="button" className="flex items-center"><Icon name="filter" />:1</button>
      </div>
    </footer>
  );
}

function DialogSelect({ id, label, value }) {
  return (
    <div className="flex h-5 items-center">
      <label htmlFor={id} className="w-[65px]">{label}</label>
      <div className="relative w-[200px]">
        <select id={id} className="block h-5 w-full appearance-none border border-[#adadad] bg-[#e3e3e3] pl-[3px] outline-none">
          <option>{value}</option>
        </select>
        <Chevron className="pointer-events-none absolute right-1 top-1.5 text-[#444]" stroke={1} />
      </div>
    </div>
  );
}

const BUTTON = "h-[22px] whitespace-nowrap border border-[#adadad] bg-[#e1e1e1]";

function TypeDialog() {
  return (
    <div role="dialog" aria-label="Propiedades de tipo" className="absolute left-[686px] top-[70px] flex h-[594px] w-[410px] flex-col border border-[#6a6a6a] bg-[#f0f0f0] text-[10px] text-[#111] shadow-[3px_4px_14px_rgba(0,0,0,0.35)]">
      <div className="flex h-[30px] items-center justify-between bg-white pl-2 pr-2.5 text-[11px]">
        <h2>Propiedades de tipo</h2>
        <button type="button" aria-label="Cerrar">
          <svg viewBox="0 0 10 10" className="size-2.5" stroke="#222"><path d="m.5.500 9 9M9.500.500l-9 9" /></svg>
        </button>
      </div>
      <div className="flex justify-between pl-[19px] pr-3 pt-[11px]">
        <div className="flex flex-col gap-3">
          <DialogSelect id="familia" label="Familia:" value="M_Pipe Connector - Domestic Hot Wate" />
          <DialogSelect id="tipo" label="Tipo:" value="Standard" />
        </div>
        <div className="flex w-[100px] flex-col gap-2">
          <button type="button" className={BUTTON}>Cargar...</button>
          <button type="button" className={BUTTON}>Duplicar...</button>
          <button type="button" className={BUTTON}>Cambiar nombre...</button>
        </div>
      </div>
      <p className="flex h-7 items-center pl-[19px]">Parámetros de tipo</p>
      <div className="ml-5 mr-3 flex h-[364px] overflow-hidden border-l border-t border-[#6d6d6d] text-[11px]">
        <div className="h-full w-[356px] overflow-hidden bg-white">
          <table className="w-full table-fixed border-separate border-spacing-0">
            <colgroup><col /><col className="w-[180px]" /><col className="w-3" /></colgroup>
            <thead>
              <tr className="h-[19px] bg-[#f0f0f0]">
                <th className="border-b border-[#555] p-0 font-normal">Parámetro</th>
                <th className="border-b border-l border-[#555] p-0 font-normal">Valor</th>
                <th className="border-x border-b border-[#555] p-0 text-[9px] font-normal text-[#555]">=</th>
              </tr>
            </thead>
            {TYPE_GROUPS.map((g) => <GroupRows key={g.title} group={g} strong />)}
          </table>
        </div>
        <VScroll className="ml-0.5 w-[14px]" thumb="h-[264px]" />
      </div>
      <div className="flex h-9 items-center pl-[19px]">
        <a href="#propiedades" className="text-[#1a66c0] underline">¿Qué hacen estas propiedades?</a>
      </div>
      <div className="mt-1.5 flex gap-2 pl-[19px] pr-3">
        <button type="button" className={clsx(BUTTON, "mr-auto w-[83px]")}>&lt;&lt; Vista previa</button>
        <button type="button" className="relative h-[22px] w-[82px] border border-[#3a83bd] bg-[#cfe6f8]">
          Aceptar
          <svg viewBox="0 0 14 20" className="absolute right-0 top-0.5 h-5 w-3.5" aria-hidden="true">
            <path d="M3 1v15l3.500-3 2.500 6 2.500-1L9 12h5z" fill="#fff" stroke="#333" />
          </svg>
        </button>
        <button type="button" className={clsx(BUTTON, "w-[82px]")}>Cancelar</button>
        <button type="button" disabled className="h-[22px] w-[82px] border border-[#bfbfbf] bg-[#cccccc] text-[#8b8b8b]">Aplicar</button>
      </div>
      <svg viewBox="0 0 8 8" className="absolute bottom-px right-px size-2" fill="#aaa" aria-hidden="true">
        <path d="M6 0h2v2H6zM6 3h2v2H6zM6 6h2v2H6zM3 3h2v2H3zM3 6h2v2H3zM0 6h2v2H0z" />
      </svg>
    </div>
  );
}

export default function App() {
  return (
    <div className="relative flex h-screen flex-col overflow-hidden bg-[#f0f0f0] font-['DejaVu_Sans_Condensed','Open_Sans',sans-serif] text-[11px] text-[#222]">
      <TitleBar />
      <RibbonTabs />
      <Ribbon />
      <div className="flex h-[27px] shrink-0 items-center border-b-2 border-[#d3dcc8] bg-[#e3f0d6] pl-1.5 pt-1 text-[#98a18f]">
        Modificar | Aparatos sanitarios
      </div>
      <div className="flex min-h-0 flex-1">
        <aside className="flex w-[206px] shrink-0 flex-col border-r-[3px] border-[#c4c4c4]">
          <PropertiesPalette />
          <ProjectBrowser />
        </aside>
        <main className="flex min-w-0 flex-1 flex-col">
          <ViewTabs />
          <Canvas />
          <ViewControlBar />
        </main>
      </div>
      <StatusBar />
      <TypeDialog />
    </div>
  );
}
